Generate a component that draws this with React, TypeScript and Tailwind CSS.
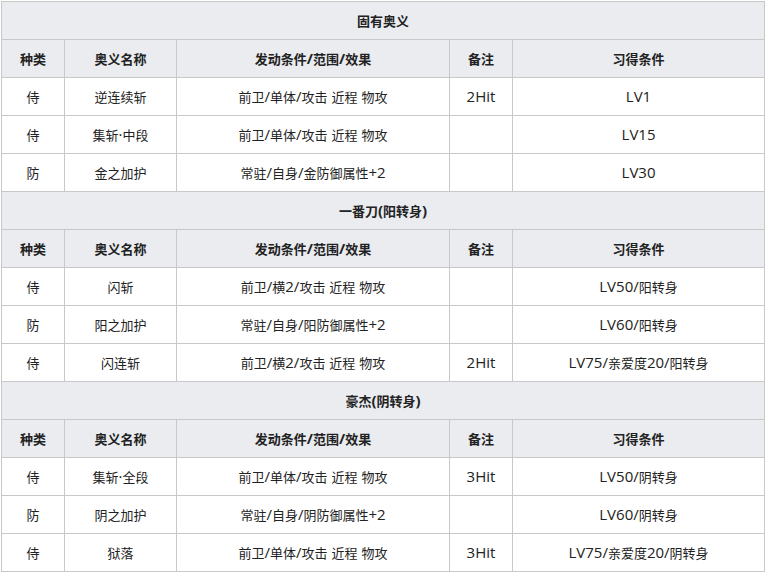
type Row = [string, string, string, string, string];

const sections: { title: string; rows: Row[] }[] = [
  {
    title: "固有奥义",
    rows: [
      ["侍", "逆连续斩", "前卫/单体/攻击 近程 物攻", "2Hit", "LV1"],
      ["侍", "集斩·中段", "前卫/单体/攻击 近程 物攻", "", "LV15"],
      ["防", "金之加护", "常驻/自身/金防御属性+2", "", "LV30"],
    ],
  },
  {
    title: "一番刀(阳转身)",
    rows: [
      ["侍", "闪斩", "前卫/横2/攻击 近程 物攻", "", "LV50/阳转身"],
      ["防", "阳之加护", "常驻/自身/阳防御属性+2", "", "LV60/阳转身"],
      ["侍", "闪连斩", "前卫/横2/攻击 近程 物攻", "2Hit", "LV75/亲爱度20/阳转身"],
    ],
  },
  {
    title: "豪杰(阴转身)",
    rows: [
      ["侍", "集斩·全段", "前卫/单体/攻击 近程 物攻", "3Hit", "LV50/阴转身"],
      ["防", "阴之加护", "常驻/自身/阴防御属性+2", "", "LV60/阴转身"],
      ["侍", "狱落", "前卫/单体/攻击 近程 物攻", "3Hit", "LV75/亲爱度20/阴转身"],
    ],
  },
];

const headers = ["种类", "奥义名称", "发动条件/范围/效果", "备注", "习得条件"];

const cell = "border border-[#c8c8c8] px-2 text-center align-middle leading-5";

// latin runs look wider in the original, so give them their own size
function Mixed({ text }: { text: string }) {
  const parts = text.split(/([\u3000-\u9fff\uff00-\uffef]+)/).filter(Boolean);
  return (
    <>
      {parts.map((p, i) =>
        /[\u3000-\u9fff\uff00-\uffef]/.test(p) ? (
          <span key={i}>{p}</span>
        ) : (
          <span key={i} className="font-['Open_Sans'] text-[15px]">
            {p}
          </span>
        )
      )}
    </>
  );
}

export default function App() {
  return (
    <div
      className="bg-white pt-px pl-px text-[13px] text-[#222]"
      style={{ fontFamily: '"Noto Sans CJK SC", sans-serif' }}
    >
      <table className="w-[763px] table-fixed border-collapse">
        <colgroup>
          <col className="w-[63px]" />
          <col className="w-[112px]" />
          <col className="w-[273px]" />
          <col className="w-[63px]" />
          <col className="w-[252px]" />
        </colgroup>
        <tbody>
          {sections.map((s) => (
            <>
              <tr key={s.title} className="h-[38px] bg-[#eaecf0]">
                <th colSpan={5} className={cell + " font-bold"}>
                  <Mixed text={s.title} />
                </th>
              </tr>
              <tr key={s.title + "-h"} className="h-[38px] bg-[#eaecf0]">
                {headers.map((h) => (
                  <th key={h} className={cell + " font-bold"}>
                    <Mixed text={h} />
                  </th>
                ))}
              </tr>
              {s.rows.map((r, i) => (
                <tr key={s.title + i} className="h-[38px]">
                  {r.map((c, j) => (
                    <td key={j} className={cell + " font-normal"}>
                      <Mixed text={c} />
                    </td>
                  ))}
                </tr>
              ))}
            </>
          ))}
        </tbody>
      </table>
    </div>
  );
}
